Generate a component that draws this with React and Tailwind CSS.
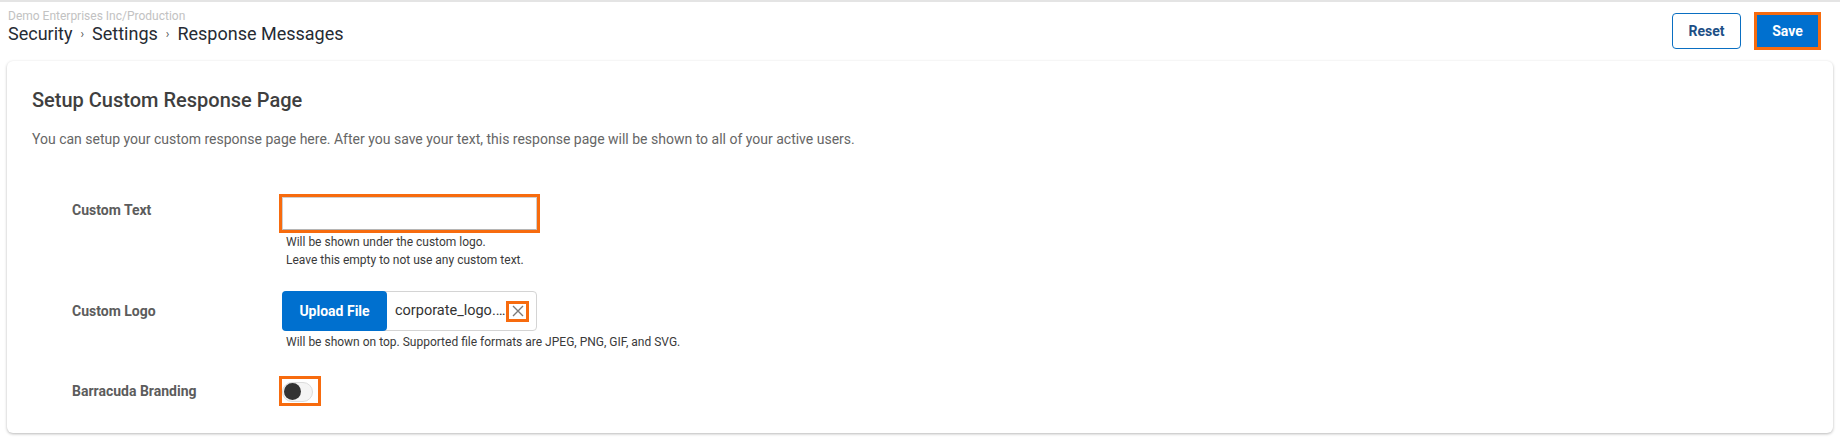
import React from "react";

export default function App() {
  return (
    <div className="w-full h-[437px] bg-white border-t-2 border-[#e4e4e4] font-['Roboto',_'Liberation_Sans',_sans-serif] overflow-hidden">
      {/* Header */}
      <div className="flex justify-between items-start h-[59px] pl-2 pr-[19px]">
        <div className="pt-[7px]">
          <div className="text-[12px] leading-[14px] text-[#c2c2c2]">Demo Enterprises Inc/Production</div>
          <div className="flex items-center text-[18px] leading-[22px] text-[#262b33]">
            <span>Security</span>
            <span className="mx-[8px] text-[12px] text-[#555]">›</span>
            <span>Settings</span>
            <span className="mx-[8px] text-[12px] text-[#555]">›</span>
            <span>Response Messages</span>
          </div>
        </div>
        <div className="flex items-center gap-[13px] mt-[10px]">
          <button className="w-[69px] h-9 rounded border border-[#0a6fc2] bg-white text-[14px] font-bold text-[#1d4f86]">
            Reset
          </button>
          <button className="w-[67px] h-[38px] border-[3px] border-[#f76b0e] bg-[#0070cf] text-[14px] font-bold text-white">
            Save
          </button>
        </div>
      </div>

      {/* Card */}
      <div className="mx-[7px] h-[372px] rounded-md bg-white shadow-[0_1px_3px_rgba(0,0,0,0.28)] px-[25px] pt-[25px]">
        <h1 className="text-[20px] leading-7 font-medium text-[#3f3f3f]">Setup Custom Response Page</h1>
        <p className="mt-[15px] text-[14px] leading-5 text-[#666]">
          You can setup your custom response page here. After you save your text, this response page will be shown to all of your active users.
        </p>

        <div className="pl-10 mt-[45px]">
          {/* Custom Text */}
          <div className="flex items-start">
            <div className="w-[207px] pt-[6px] text-[14px] leading-5 font-bold text-[#5c5c5c]">Custom Text</div>
            <div>
              <div className="w-[261px] h-[39px] border-[3px] border-[#f76b0e]">
                <div className="w-full h-full border border-[#cfcfcf] border-b-[#b5b5b5] bg-white" />
              </div>
              <div className="pl-[7px] text-[12px] leading-[18px] text-[#3a3a3a]">
                <div>Will be shown under the custom logo.</div>
                <div>Leave this empty to not use any custom text.</div>
              </div>
            </div>
          </div>

          {/* Custom Logo */}
          <div className="flex items-start mt-[22px]">
            <div className="w-[207px] pt-[10px] text-[14px] leading-5 font-bold text-[#5c5c5c]">Custom Logo</div>
            <div>
              <div className="ml-[3px] w-[255px] h-10 flex items-center border border-[#d4d4d4] rounded">
                <div className="-ml-px -my-px h-10 w-[105px] flex items-center justify-center rounded bg-[#0070cf] text-[14px] font-bold text-white">
                  Upload File
                </div>
                <span className="ml-2 text-[14.5px] text-[#333] whitespace-nowrap">corporate_logo.…</span>
                <div className="ml-auto mr-[7px] w-[23px] h-[21px] border-[3px] border-[#f76b0e] flex items-center justify-center">
                  <svg width="12" height="12" viewBox="0 0 12 12">
                    <path d="M1 1 L11 11 M11 1 L1 11" stroke="#7a7a7a" strokeWidth="1.4" fill="none" />
                  </svg>
                </div>
              </div>
              <div className="mt-[2px] pl-[7px] text-[12px] leading-[18px] text-[#3a3a3a]">
                Will be shown on top. Supported file formats are JPEG, PNG, GIF, and SVG.
              </div>
            </div>
          </div>

          {/* Barracuda Branding */}
          <div className="flex items-center mt-[25px]">
            <div className="w-[207px] text-[14px] leading-5 font-bold text-[#5c5c5c]">Barracuda Branding</div>
            <div className="w-[42px] h-[30px] border-[3px] border-[#f76b0e] flex items-center pt-[1px]">
              <div className="w-[31px] h-[20px] rounded-full bg-[#f4f4f4] border border-[#dcdcdc] flex items-center pl-px">
                <div className="w-[17px] h-[17px] rounded-full bg-[#333]" />
              </div>
            </div>
          </div>
        </div>
      </div>
    </div>
  );
}
